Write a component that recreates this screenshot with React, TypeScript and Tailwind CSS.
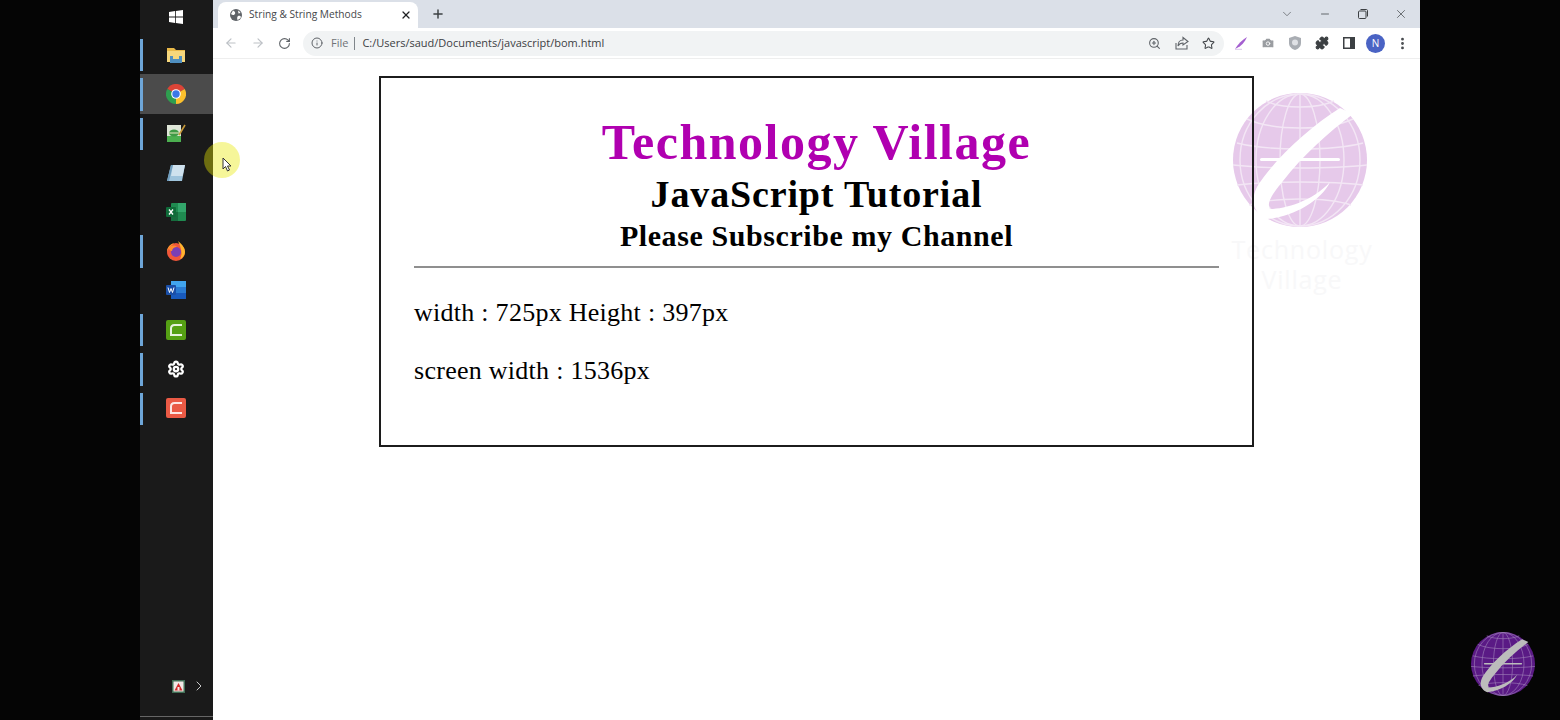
import React from 'react';
import { ArrowLeft, ArrowRight, RotateCw, Info, ZoomIn, Star, Camera, Puzzle, MoreVertical, X, Plus, ChevronDown, ChevronRight, Minus, Settings } from 'lucide-react';

const Globe: React.FC<{ fill: string; line: string; swoosh: string; size: number }> = ({ fill, line, swoosh, size }) => (
  <svg width={size} height={size} viewBox="0 0 134 134">
    <circle cx="67" cy="67" r="67" fill={fill} />
    <g fill="none" stroke={line} strokeWidth="1.4">
      <ellipse cx="67" cy="67" rx="20" ry="66" />
      <ellipse cx="67" cy="67" rx="44" ry="66" />
      <ellipse cx="67" cy="67" rx="60" ry="66" />
      <path d="M67 1V133" />
      <path d="M14 26C40 38 94 38 120 26" />
      <path d="M4 50C35 58 99 58 130 50" />
      <path d="M0 72C35 76 99 76 134 72" />
      <path d="M4 92C35 88 99 88 130 92" />
      <path d="M16 112C40 104 94 104 118 112" />
      <path d="M33 8C50 16 84 16 101 8" />
    </g>
    <path d="M107 15L120 21C95 40 70 62 50 88C40 100 33 110 37 116C52 116 80 108 97 89C88 108 60 124 34 126C20 120 17 108 24 94C40 68 75 35 107 15Z" fill={swoosh} />
    <rect x="27" y="65" width="80" height="3" rx="1.5" fill={swoosh} />
  </svg>
);

const WindowsIcon = () => (
  <svg width="14" height="14" viewBox="0 0 14 14" fill="#fff">
    <path d="M0 2L6 1.1V6.6H0ZM6.8 1L14 0V6.6H6.8ZM0 7.4H6V12.9L0 12ZM6.8 7.4H14V14L6.8 13Z" />
  </svg>
);

const FolderIcon = () => (
  <svg width="20" height="18" viewBox="0 0 20 18">
    <path d="M1 2H8L10 4H19V16H1Z" fill="#e9b949" />
    <rect x="1" y="5" width="18" height="11" fill="#f6d77c" />
    <rect x="4" y="10" width="12" height="7" fill="#4f8fc0" />
    <rect x="7" y="10" width="6" height="3" fill="#f6d77c" />
  </svg>
);

const ChromeIcon = () => (
  <svg width="20" height="20" viewBox="0 0 20 20">
    <path d="M10 10L1.3 5A10 10 0 0 1 18.7 5Z" fill="#db4437" />
    <path d="M10 10L18.7 5A10 10 0 0 1 10 20Z" fill="#fbc02d" />
    <path d="M10 10L10 20A10 10 0 0 1 1.3 5Z" fill="#2e9e4f" />
    <circle cx="10" cy="10" r="4.8" fill="#fff" />
    <circle cx="10" cy="10" r="3.7" fill="#3b78e7" />
  </svg>
);

const EditorIcon = () => (
  <svg width="20" height="19" viewBox="0 0 20 19">
    <rect x="1" y="1" width="14" height="17" fill="#dfe6d8" />
    <rect x="1" y="12" width="14" height="6" fill="#4caf50" />
    <ellipse cx="8" cy="9" rx="5" ry="3.5" fill="#3f9a46" />
    <path d="M3 9H13" stroke="#e8e8c0" strokeWidth="1" />
    <path d="M13 11L19 1" stroke="#c79a3a" strokeWidth="1.6" />
  </svg>
);

const NoteIcon = () => (
  <svg width="20" height="18" viewBox="0 0 20 18">
    <path d="M5 1H19L16 17H1Z" fill="#9fc4dc" />
    <path d="M7 1H19L16.5 12H5Z" fill="#cfe2ee" />
    <path d="M1 17L5 1L7 1L3 17Z" fill="#6f9dbd" />
  </svg>
);

const ExcelIcon = () => (
  <svg width="20" height="18" viewBox="0 0 20 18">
    <rect x="5" y="0" width="15" height="18" rx="1" fill="#1f8a50" />
    <rect x="12" y="0" width="8" height="9" fill="#33a66b" />
    <rect x="5" y="9" width="7" height="9" fill="#166c3d" />
    <rect x="0" y="4" width="10" height="10" rx="1" fill="#0f6b39" />
    <path d="M3 6.5L7 11.5M7 6.5L3 11.5" stroke="#fff" strokeWidth="1.3" />
  </svg>
);

const FirefoxIcon = () => (
  <svg width="20" height="20" viewBox="0 0 20 20">
    <circle cx="10" cy="11" r="9" fill="#f0573a" />
    <path d="M1 11A9 9 0 0 1 8 2C6 5 4 4 1 11Z" fill="#ff9a2e" />
    <path d="M12 0C16 3 19 7 19 11C19 14 17 17 14 18C17 13 15 6 12 0Z" fill="#ffb52e" />
    <circle cx="10" cy="11" r="5" fill="#7a3fb5" />
    <path d="M3 7C5 4 9 4 11 6C8 6 6 8 6 10C4 10 3 9 3 7Z" fill="#ff8c2e" />
  </svg>
);

const WordIcon = () => (
  <svg width="20" height="18" viewBox="0 0 20 18">
    <rect x="5" y="0" width="15" height="6" fill="#41a5ee" />
    <rect x="5" y="6" width="15" height="6" fill="#2b7cd3" />
    <rect x="5" y="12" width="15" height="6" fill="#185abd" />
    <rect x="0" y="4" width="10" height="10" rx="1" fill="#1a4fa8" />
    <path d="M2 6.5L3.5 11.5L5 7.5L6.5 11.5L8 6.5" stroke="#fff" strokeWidth="1" fill="none" />
  </svg>
);

const CamtasiaIcon: React.FC<{ bg: string }> = ({ bg }) => (
  <svg width="20" height="20" viewBox="0 0 20 20">
    <rect width="20" height="20" rx="2" fill={bg} />
    <path d="M16 5H8.5C6.5 5 5 6.5 5 8.5V15H16" fill="none" stroke="#fff" strokeWidth="2" opacity="0.85" />
  </svg>
);

const BottomAppIcon = () => (
  <svg width="13" height="13" viewBox="0 0 13 13">
    <rect width="13" height="13" fill="#3f6f55" />
    <rect x="1.5" y="1.5" width="10" height="10" fill="#f2e9e6" />
    <path d="M6.5 3L10.5 10.5H2.5Z" fill="#d22a2a" />
    <rect x="5.5" y="7" width="2" height="3.5" fill="#f2e9e6" />
  </svg>
);

const ShareIcon = () => (
  <svg width="14" height="14" viewBox="0 0 14 14" fill="none" stroke="#5f6368" strokeWidth="1.1">
    <path d="M1 7V13H12V9" />
    <path d="M8 1.5L13 5.5L8 9V7C5.5 7 4 8 3 10C3 6.5 5 4 8 4Z" />
  </svg>
);

const PenIcon = () => (
  <svg width="14" height="14" viewBox="0 0 14 14">
    <path d="M1 13C4 8 8 4 13 1C11 6 7 10 3 12Z" fill="#a45fd0" />
    <path d="M1 13.3H8" stroke="#d9c4ec" strokeWidth="1" />
  </svg>
);

const ShieldIcon = () => (
  <svg width="12" height="14" viewBox="0 0 12 14">
    <path d="M6 0L12 2V7C12 10.5 9.5 12.8 6 14C2.5 12.8 0 10.5 0 7V2Z" fill="#a9adb3" />
    <circle cx="6" cy="6.5" r="3" fill="#dfe1e5" />
  </svg>
);

const PanelIcon = () => (
  <svg width="12" height="12" viewBox="0 0 12 12">
    <rect x="0.75" y="0.75" width="10.5" height="10.5" fill="none" stroke="#3c4043" strokeWidth="1.5" />
    <rect x="7" y="0.75" width="4.5" height="10.5" fill="#3c4043" />
  </svg>
);

const RestoreIcon = () => (
  <svg width="10" height="10" viewBox="0 0 10 10" fill="none" stroke="#3c4043" strokeWidth="1">
    <rect x="0.5" y="2" width="7.5" height="7.5" rx="1" />
    <path d="M2.5 0.5H8.5C9 0.5 9.5 1 9.5 1.5V7.5" />
  </svg>
);

const TabGlobe = () => (
  <svg width="12" height="12" viewBox="0 0 12 12">
    <circle cx="6" cy="6" r="6" fill="#5f6368" />
    <path d="M3 1.5C5 2.5 6 4 4.5 5.5C3.5 6.5 2 6 1 5ZM8 7C9.5 6.5 10.5 7 11 8C10 10 9 10.5 7.5 11C7 9.5 7 8 8 7ZM8 1.5C9 2 10 3 10.5 4L8.5 4.5Z" fill="#fff" />
  </svg>
);

const Cursor = () => (
  <svg width="10" height="15" viewBox="0 0 10 15">
    <path d="M1 1V12L3.5 9.5L5.5 14L7.5 13L5.5 9H9Z" fill="#fff" stroke="#333" strokeWidth="1" />
  </svg>
);

const dockItems = [
  { icon: <WindowsIcon />, pinned: false, active: false, first: true },
  { icon: <FolderIcon />, pinned: true, active: false },
  { icon: <ChromeIcon />, pinned: true, active: true },
  { icon: <EditorIcon />, pinned: true, active: false },
  { icon: <NoteIcon />, pinned: false, active: false },
  { icon: <ExcelIcon />, pinned: false, active: false },
  { icon: <FirefoxIcon />, pinned: true, active: false },
  { icon: <WordIcon />, pinned: false, active: false },
  { icon: <CamtasiaIcon bg="#55a014" />, pinned: true, active: false },
  { icon: <Settings size={18} color="#fff" strokeWidth={3} />, pinned: true, active: false },
  { icon: <CamtasiaIcon bg="#ea5a45" />, pinned: true, active: false },
];

const Slot: React.FC<{ children: React.ReactNode }> = ({ children }) => (
  <div className="w-[27px] h-full flex items-center justify-center shrink-0">{children}</div>
);

const App: React.FC = () => {
  return (
    <div className="relative w-[1560px] h-[720px] bg-[#050505] flex overflow-hidden font-['Open_Sans',sans-serif]">
      <div className="w-[140px] shrink-0" />

      {/* Taskbar */}
      <aside className="w-[73px] shrink-0 bg-[#1a1a1a] flex flex-col">
        {dockItems.map((item, idx) => (
          <div
            key={idx}
            className={`relative flex items-center justify-center pr-[1px] ${item.first ? 'h-[35px] pb-[1px]' : 'h-[39.3px]'} ${item.active ? 'bg-[#4b4b4b]' : ''}`}
          >
            {item.pinned && <span className="absolute left-0 top-[4px] bottom-[3px] w-[2.5px] bg-[#6ea6d8]" />}
            {item.icon}
          </div>
        ))}
        <div className="mt-auto flex items-center pl-[32px] gap-[6px] h-[20px] mb-[20px]">
          <BottomAppIcon />
          <ChevronRight size={16} color="#c8c8c8" strokeWidth={1.5} />
        </div>
        <div className="h-[1px] bg-[#666] mb-[3px]" />
      </aside>

      {/* Browser */}
      <div className="w-[1207px] shrink-0 bg-white flex flex-col">
        <div className="h-[28px] bg-[#dbe0e8] flex items-end pl-[5px]">
          <div className="w-[200px] h-[26px] bg-white rounded-t-[8px] flex items-center pl-[12px] pr-[6px]">
            <TabGlobe />
            <span className="ml-[7px] flex-1 text-[10.2px] text-[#45474a] whitespace-nowrap">String &amp; String Methods</span>
            <X size={12} color="#202124" strokeWidth={2.5} />
          </div>
          <div className="h-full flex items-center ml-[13px]">
            <Plus size={14} color="#3c4043" strokeWidth={2.5} />
          </div>
          <div className="ml-auto h-full flex">
            <div className="w-[38px] flex items-center justify-center"><ChevronDown size={14} color="#5f6368" strokeWidth={1.3} /></div>
            <div className="w-[38px] flex items-center justify-center"><Minus size={12} color="#3c4043" strokeWidth={1.5} /></div>
            <div className="w-[38px] flex items-center justify-center"><RestoreIcon /></div>
            <div className="w-[38px] flex items-center justify-center"><X size={14} color="#3c4043" strokeWidth={1.2} /></div>
          </div>
        </div>

        <div className="h-[31px] flex items-center pl-[4px] border-b border-[#eeeeee]">
          <Slot><ArrowLeft size={14} color="#bdc1c6" strokeWidth={2} /></Slot>
          <Slot><ArrowRight size={14} color="#bdc1c6" strokeWidth={2} /></Slot>
          <Slot><RotateCw size={13} color="#5f6368" strokeWidth={2} /></Slot>
          <div className="ml-[5px] w-[921px] h-[25px] rounded-full bg-[#f1f3f4] flex items-center pl-[8px] pr-[2px] shrink-0">
            <Info size={12} color="#5f6368" strokeWidth={2} />
            <span className="ml-[8px] text-[11px] text-[#6f7276]">File</span>
            <span className="ml-[6px] w-[1px] h-[13px] bg-[#80868b]" />
            <span className="ml-[7px] text-[11px] text-[#3c4043] whitespace-nowrap">C:/Users/saud/Documents/javascript/bom.html</span>
            <div className="ml-auto flex h-full">
              <Slot><ZoomIn size={13} color="#5f6368" strokeWidth={2} /></Slot>
              <Slot><ShareIcon /></Slot>
              <Slot><Star size={13} color="#45484c" strokeWidth={2} /></Slot>
            </div>
          </div>
          <div className="ml-[3px] flex h-full">
            <Slot><PenIcon /></Slot>
            <Slot><Camera size={14} color="#fff" fill="#9a9da1" strokeWidth={1.5} /></Slot>
            <Slot><ShieldIcon /></Slot>
            <Slot><Puzzle size={14} color="#3c4043" fill="#3c4043" /></Slot>
            <Slot><PanelIcon /></Slot>
            <Slot>
              <div className="w-[19px] h-[19px] rounded-full bg-[#4a63c4] text-white text-[10px] flex items-center justify-center">N</div>
            </Slot>
            <Slot><MoreVertical size={15} color="#45484c" strokeWidth={2.5} /></Slot>
          </div>
        </div>

        {/* Page */}
        <main className="relative flex-1 pl-[166px] pt-[17px]">
          <div className="absolute left-[1020px] top-[34px] w-[134px] flex flex-col items-center">
            <Globe fill="#e6c9ea" line="#f3e6f5" swoosh="#ffffff" size={134} />
            <div className="mt-[7px] w-[170px] ml-[4px] text-center text-[25px] leading-[30px] tracking-[0.8px] text-[#f8f8f9]">
              Technology<br />Village
            </div>
          </div>
          <div className="relative w-[875px] h-[371px] border-2 border-[#1c1c1c] px-[33px] font-['Liberation_Serif',serif] text-black">
            <h1 className="mt-[36px] text-center font-bold text-[50px] leading-[56px] tracking-[1.5px] text-[#b000b0]">Technology Village</h1>
            <h2 className="mt-[1px] text-center font-bold text-[38px] leading-[46px] tracking-[0.85px]">JavaScript Tutorial</h2>
            <h3 className="mt-[1px] text-center font-bold text-[30px] leading-[36px] tracking-[0.58px]">Please Subscribe my Channel</h3>
            <div className="mt-[12px] h-[2px] bg-[#8f8f8f]" />
            <p className="mt-[28px] text-[26px] leading-[34px] tracking-[0.27px]">width : 725px Height : 397px</p>
            <p className="mt-[24px] text-[26px] leading-[34px] tracking-[0.27px]">screen width : 1536px</p>
          </div>
        </main>
      </div>

      {/* Channel badge */}
      <div className="flex-1 flex items-end justify-end pr-[25px] pb-[24px]">
        <Globe fill="#5a1a85" line="#9b7ab5" swoosh="#bcbcbc" size={64} />
      </div>

      {/* Pointer highlight */}
      <div className="absolute left-[204px] top-[142px] w-[36px] h-[36px] rounded-full bg-[#e8e800]/40" />
      <div className="absolute left-[222px] top-[157px]"><Cursor /></div>
    </div>
  );
};

export default App;
